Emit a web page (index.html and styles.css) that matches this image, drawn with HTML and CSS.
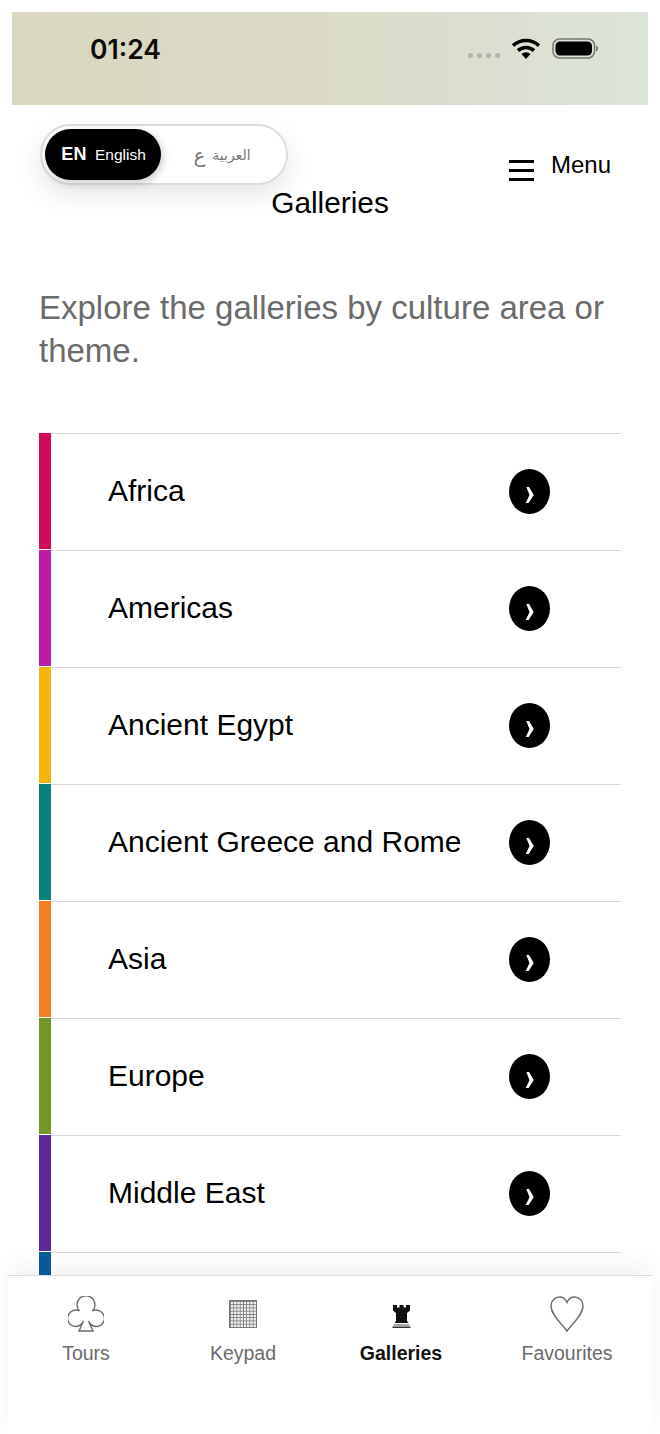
FILE: index.html
```html
<!DOCTYPE html>
<html>
  <head>
    <meta http-equiv="Content-Type" content="text/html; charset=utf-8">
    <title>Galleries</title>
    <link rel="stylesheet" href="styles.css">
  </head>
  <body>
    <div class="status">
      <span class="time">01:24</span>
      <div class="status-icons">
        <span class="dots"><i></i><i></i><i></i><i></i></span>
        <svg class="wifi" width="30" height="21" viewBox="0 0 30 21">
          <path d="M2 7.6A19 19 0 0 1 28 7.6" fill="none" stroke="#000" stroke-width="3.6"/>
          <path d="M7 12.6A12 12 0 0 1 23 12.6" fill="none" stroke="#000" stroke-width="3.6"/>
          <path d="M10.4 16A7 7 0 0 1 19.6 16L15 21Z"/>
        </svg>
        <svg class="battery" width="46" height="21" viewBox="0 0 46 21">
          <rect x="1" y="1" width="41.5" height="19" rx="6.5" fill="none" stroke="#77786f" stroke-width="1.5"/>
          <rect x="3.5" y="3.5" width="36.5" height="14" rx="4.5"/>
          <path d="M44 7.5C45.5 8 46 9 46 10.5S45.5 13 44 13.5Z" fill="#77786f"/>
        </svg>
      </div>
    </div>

    <header class="top">
      <div class="lang">
        <div class="lang-on"><b>EN</b><span>English</span></div>
        <div class="lang-off"><span class="ar-letter">ع</span><span>العربية</span></div>
      </div>
      <div class="menu">
        <svg class="burger" width="25" height="21" viewBox="0 0 25 21">
          <path d="M0 0h25v3H0zM0 9h25v3H0zM0 18h25v3H0z"/>
        </svg>
        <span>Menu</span>
      </div>
    </header>

    <h1 class="title">Galleries</h1>
    <p class="intro">Explore the galleries by culture area or theme.</p>

    <ul class="list">
      <li class="row">
        <span class="bar c-africa"></span>
        <div class="row-body"><span class="name">Africa</span><span class="go"><svg width="8" height="15" viewBox="0 0 8 15"><path d="M1 0H3.6L8 7.5 3.2 15H.5L4 7.5Z"/></svg></span></div>
      </li>
      <li class="row">
        <span class="bar c-americas"></span>
        <div class="row-body"><span class="name">Americas</span><span class="go"><svg width="8" height="15" viewBox="0 0 8 15"><path d="M1 0H3.6L8 7.5 3.2 15H.5L4 7.5Z"/></svg></span></div>
      </li>
      <li class="row">
        <span class="bar c-egypt"></span>
        <div class="row-body"><span class="name">Ancient Egypt</span><span class="go"><svg width="8" height="15" viewBox="0 0 8 15"><path d="M1 0H3.6L8 7.5 3.2 15H.5L4 7.5Z"/></svg></span></div>
      </li>
      <li class="row">
        <span class="bar c-greece"></span>
        <div class="row-body"><span class="name">Ancient Greece and Rome</span><span class="go"><svg width="8" height="15" viewBox="0 0 8 15"><path d="M1 0H3.6L8 7.5 3.2 15H.5L4 7.5Z"/></svg></span></div>
      </li>
      <li class="row">
        <span class="bar c-asia"></span>
        <div class="row-body"><span class="name">Asia</span><span class="go"><svg width="8" height="15" viewBox="0 0 8 15"><path d="M1 0H3.6L8 7.5 3.2 15H.5L4 7.5Z"/></svg></span></div>
      </li>
      <li class="row">
        <span class="bar c-europe"></span>
        <div class="row-body"><span class="name">Europe</span><span class="go"><svg width="8" height="15" viewBox="0 0 8 15"><path d="M1 0H3.6L8 7.5 3.2 15H.5L4 7.5Z"/></svg></span></div>
      </li>
      <li class="row">
        <span class="bar c-mideast"></span>
        <div class="row-body"><span class="name">Middle East</span><span class="go"><svg width="8" height="15" viewBox="0 0 8 15"><path d="M1 0H3.6L8 7.5 3.2 15H.5L4 7.5Z"/></svg></span></div>
      </li>
      <li class="row">
        <span class="bar c-last"></span>
        <div class="row-body"></div>
      </li>
    </ul>

    <nav class="tabs">
      <div class="tab">
        <span class="tab-icon">
          <svg width="36" height="36" viewBox="0 0 36 36">
            <path d="M11.5 15A9 9 0 1 1 24.5 15 8.2 8.2 0 1 1 20.5 25L25 35H11L15.5 25A8.2 8.2 0 1 1 11.5 15Z" fill="none" stroke="#6b6b6b" stroke-width="1.4"/>
          </svg>
        </span>
        <span>Tours</span>
      </div>
      <div class="tab">
        <span class="tab-icon"><span class="grid-icon"></span></span>
        <span>Keypad</span>
      </div>
      <div class="tab tab-on">
        <span class="tab-icon">
          <svg width="19" height="24" viewBox="0 0 19 24">
            <path d="M1 1H5V3.5H7.5V1H11.500V3.500H14V1H18V6.500L15 9V17L16.500 19H2.500L4 17V9L1 6.500Z" fill="#111"/>
            <path d="M1.500 20.500H17.500V21.500H1.500Z" fill="#555"/>
            <path d="M.5 22.500H18.500V24H.5Z" fill="#333"/>
          </svg>
        </span>
        <span>Galleries</span>
      </div>
      <div class="tab">
        <span class="tab-icon">
          <svg width="34" height="36" viewBox="0 0 34 36">
            <path d="M17 35C12 28 1 19 1 10 1 4.500 5 1 9.500 1 13 1 15.500 3 17 6.500 18.500 3 21 1 24.500 1 29 1 33 4.500 33 10 33 19 22 28 17 35Z" fill="none" stroke="#6b6b6b" stroke-width="1.4"/>
          </svg>
        </span>
        <span>Favourites</span>
      </div>
    </nav>
  </body>
</html>
```

FILE: styles.css
```css
* { box-sizing: border-box; }
html, body { margin: 0; padding: 0; }
body { position: relative; width: 660px; height: 1434px; overflow: hidden; background: #fff; color: #000; font-family: "Liberation Sans", Arial, "DejaVu Sans", sans-serif; }

.status { display: flex; justify-content: space-between; align-items: center; height: 93px; margin: 12px 12px 0; padding: 0 50px 20px 78px; background: linear-gradient(90deg, #d9d7bf 0%, #dadac6 45%, #dde4da 100%); }
.time { font-family: Inter, sans-serif; font-size: 26.500px; font-weight: 600; color: #0c0c0c; }
.status-icons { display: flex; align-items: center; }
.dots { display: flex; gap: 4px; margin: 14px 11px 0 0; }
.dots i { width: 5px; height: 5px; border-radius: 50%; background: #b2b3aa; }
.battery { margin-left: 11px; }

.top { display: flex; justify-content: space-between; height: 61px; margin-top: 19px; padding: 0 49px 0 40px; }
.lang { display: flex; align-items: center; width: 248px; height: 61px; padding: 3px; border: 2px solid #dcdcdc; border-radius: 31px; background: #fff; box-shadow: 0 10px 26px rgba(0,0,0,.1); }
.lang-on { display: flex; align-items: center; justify-content: center; gap: 8px; flex: none; width: 116px; height: 51px; padding-left: 1px; border-radius: 26px; background: #000; color: #fff; font-size: 15.500px; box-shadow: 2px 3px 8px rgba(0,0,0,.2); }
.lang-on b { font-size: 18px; letter-spacing: .4px; }
.lang-off { display: flex; flex: 1; align-items: center; justify-content: center; gap: 7px; color: #777; font-size: 14px; }
.ar-letter { font-size: 20px; }

.menu { display: flex; gap: 17px; padding-top: 26px; font-size: 24px; }
.menu span { line-height: 30px; }
.burger { margin-top: 10px; }

.title { margin: 0; font-size: 29.800px; font-weight: 400; line-height: 36px; text-align: center; }
.intro { margin: 65px 50px 60.500px 39px; color: #6b6b6b; font-size: 33px; line-height: 43px; }

.list { margin: 0 39px; padding: 0; list-style: none; }
.row { display: flex; height: 117px; }
.bar { flex: none; width: 12px; height: 116px; }
.c-africa { background: #d20a5c; }
.c-americas { background: #bf1aa6; }
.c-egypt { background: #f5b50a; }
.c-greece { background: #0a8178; }
.c-asia { background: #f57f26; }
.c-europe { background: #76962a; }
.c-mideast { background: #5c2a96; }
.c-last { background: #0b5a9c; }
.row-body { display: flex; flex: 1; align-items: center; justify-content: space-between; padding: 0 71px 1px 57px; border-top: 1.500px solid #dadada; }
.name { font-size: 30px; }
.go { display: flex; align-items: center; justify-content: center; width: 41px; height: 45px; border-radius: 50%; background: #000; }
.go svg { width: 9px; height: 16px; margin-top: 7px; fill: #fff; }

.tabs { position: absolute; left: 8px; right: 8px; top: 1275px; bottom: 0; display: grid; grid-template-columns: 156px 158px 158px 1fr; padding-top: 20px; border-top: 1.500px solid #dcdcdc; background: #fff; box-shadow: 0 -10px 22px rgba(0,0,0,.05); color: #6b6b6b; font-size: 19.500px; }
.tab { display: flex; flex-direction: column; align-items: center; }
.tab:last-child { padding-left: 2px; }
.tab-icon { display: flex; align-items: center; justify-content: center; height: 36px; margin-bottom: 10px; }
.tab-on { color: #111; font-weight: 700; }
.tab-on .tab-icon svg { margin-top: 4px; }
.grid-icon { width: 28px; height: 28px; border: 1px solid #777; background-color: #f2f2f2; background-image: linear-gradient(#777 1px, transparent 1px), linear-gradient(90deg, #777 1px, transparent 1px); background-size: 3.250px 3.250px; }
```
